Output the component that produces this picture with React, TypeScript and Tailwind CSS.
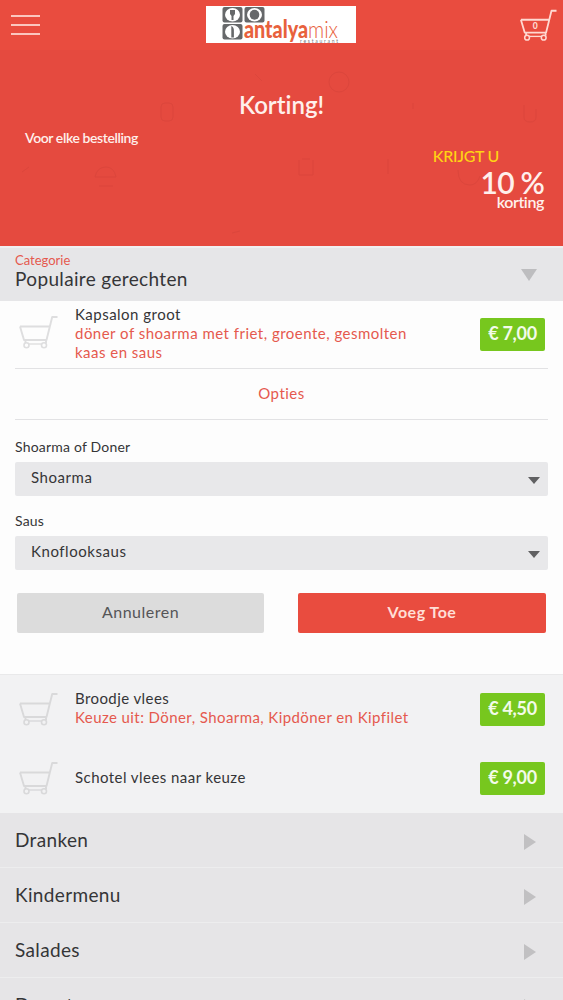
import React from "react";

const CartIcon = ({ className, count }: { className?: string; count?: number }) => (
  <svg viewBox="0 0 40 34" fill="none" stroke="currentColor" className={className}>
    <path
      d="M2 11.5 H31.5 M2 11.5 L6 25 H28.5 L34.2 2 H39.5 M7.5 25 V28 M28 25 V28"
      strokeWidth="1.9"
      strokeLinejoin="round"
    />
    <circle cx="8.5" cy="30.3" r="2.5" strokeWidth="1.6" />
    <circle cx="26" cy="30.3" r="2.5" strokeWidth="1.6" />
    <path d="M11 29 H23.5" strokeWidth="1.4" />
    {count !== undefined && (
      <text x="17" y="21.5" textAnchor="middle" fontSize="9" fontWeight="900" fill="currentColor" stroke="none">
        {count}
      </text>
    )}
  </svg>
);

const Logo = () => (
  <svg viewBox="0 0 150 37" className="h-[37px] w-[150px]">
    <rect width="150" height="37" fill="#fff" />
    <g fill="#66686a">
      <rect x="16.5" y="1" width="20" height="15.5" rx="2" />
      <rect x="38.5" y="1" width="20" height="15.5" rx="2" />
      <rect x="16.5" y="18" width="20" height="15.5" rx="2" />
    </g>
    <g fill="#fff">
      <ellipse cx="26.5" cy="8.7" rx="7.5" ry="6.7" />
      <ellipse cx="48.5" cy="8.7" rx="7.5" ry="6.7" />
      <ellipse cx="26.5" cy="25.7" rx="7.5" ry="6.7" />
    </g>
    <g fill="#66686a">
      <path d="M24 4 h5 v4 l-1.5 2 v4 h-2 v-4 l-1.5 -2 z" />
      <ellipse cx="48.5" cy="8.7" rx="4.8" ry="5" />
      <path d="M25.3 20 q3 1 2.6 6 v5.5 h-2.6 z" />
    </g>
    <text fontSize="24" fill="#e8613c">
      <tspan x="38" y="32" fontWeight="900" textLength="64" lengthAdjust="spacingAndGlyphs">
        antalya
      </tspan>
      <tspan x="102" y="32" fontWeight="300" textLength="30" lengthAdjust="spacingAndGlyphs">
        mix
      </tspan>
    </text>
    <text x="94" y="36.5" fontSize="5" fill="#77797b" textLength="38">
      restaurant
    </text>
  </svg>
);

// Faint food doodles behind the promo text
const Doodles = () => (
  <svg
    viewBox="0 0 563 196"
    className="absolute inset-0 h-full w-full text-[#cf4139] opacity-40"
    fill="none"
    stroke="currentColor"
  >
    <circle cx="339" cy="32" r="10" />
    <rect x="161" y="53" width="12" height="18" rx="4" />
    <path d="M524 55 v12 q0 5 6 5 q6 0 6 -5 v-8" />
    <path d="M299 110 v15 h14 v-15 M302 109 h8" />
    <path d="M95 127 q2 -10 11 -10 q8 0 10 10 z M99 136 h14" />
    <path d="M458 120 q0 15 12 15 q7 0 10 -9" />
    <path d="M255 24 l7 7 M413 53 v6 M388 109 v15 M22 122 l7 -5 M232 183 l8 -2" />
  </svg>
);

const Price = ({ value }: { value: string }) => (
  <span className="flex h-[33px] w-[65px] shrink-0 justify-center rounded-[2px] bg-[#77c71e] text-lg leading-[31px] font-bold tracking-[-0.3px] text-[#f3fbe9]">
    {value}
  </span>
);

const SelectField = ({ label, value }: { label: string; value: string }) => (
  <div className="h-[74px]">
    <p className="h-[25px] text-sm leading-5 tracking-[0.2px]">{label}</p>
    <button className="flex h-[34px] w-full items-center justify-between rounded-[2px] bg-[#e8e8ea] pr-2 pl-4 text-left">
      <span className="pb-[3px] text-[15px] tracking-[0.55px]">{value}</span>
      <svg viewBox="0 0 12 7" className="mt-[3px] h-[7px] w-3 fill-[#606062]">
        <path d="M0 0 H12 L6 7 Z" />
      </svg>
    </button>
  </div>
);

const categories = ["Dranken", "Kindermenu", "Salades", "Desert"];

const App = () => {
  return (
    <div className="h-[1000px] w-[563px] overflow-hidden bg-[#fdfdfd] font-['Lato',sans-serif] text-[#353537] [font-variant-ligatures:none]">
      <header className="flex h-[50px] items-start justify-between bg-[#e94c3f]">
        <button className="mt-[15px] ml-[11px] flex w-[29px] flex-col gap-[7px]" aria-label="Menu">
          <span className="h-[2px] bg-[#fbc6bf]" />
          <span className="h-[2px] bg-[#fbc6bf]" />
          <span className="h-[2px] bg-[#fbc6bf]" />
        </button>
        <div className="mt-[6px] ml-[3px]">
          <Logo />
        </div>
        <CartIcon count={0} className="mt-2 mr-[6px] h-[34px] w-[38px] text-[#ffd9d2]" />
      </header>

      <section className="relative h-[196px] bg-[#e54a3f] text-[#fff0ec]">
        <Doodles />
        <div className="relative">
          <h1 className="pt-[39px] text-center text-2xl leading-8 font-semibold">Korting!</h1>
          <p className="mt-[8px] ml-[25px] text-sm leading-[18px] font-semibold tracking-[-0.4px]">
            Voor elke bestelling
          </p>
          <p className="mr-16 text-right text-base leading-[18px] font-medium tracking-[-0.3px] text-[#ffd414]">
            KRIJGT U
          </p>
          <p className="mr-[19px] text-right text-[30px] leading-[34px] font-semibold tracking-[-0.8px]">10 %</p>
          <p className="-mt-[6px] mr-[19px] text-right text-base leading-[18px] font-semibold tracking-[-0.4px]">
            korting
          </p>
        </div>
      </section>

      <section className="flex h-[55px] items-center justify-between border-t-2 border-[#f0eff1] bg-[#e6e6e8] pr-[26px] pl-[15px]">
        <div className="pb-2">
          <p className="text-[13px] leading-4 text-[#e5594e]">Categorie</p>
          <h2 className="text-[19px] leading-[22px] tracking-[0.35px]">Populaire gerechten</h2>
        </div>
        <svg viewBox="0 0 16 12" className="h-3 w-4 fill-[#bdbdbf]">
          <path d="M0 0 H16 L8 12 Z" />
        </svg>
      </section>

      <section className="h-[373px] px-[15px]">
        <div className="flex h-[68px] items-start border-b border-[#e2e2e4]">
          <CartIcon className="mt-[13px] ml-[3px] h-[36px] w-10 text-[#dededf]" />
          <div className="mt-[4px] ml-[17px] w-[350px] text-[15px] leading-[19px] tracking-[0.48px]">
            <p>Kapsalon groot</p>
            <p className="text-[#e5594e]">döner of shoarma met friet, groente, gesmolten kaas en saus</p>
          </div>
          <div className="mt-[17px] mr-[3px] ml-auto">
            <Price value="€ 7,00" />
          </div>
        </div>
        <p className="h-[51px] border-b border-[#e2e2e4] text-center text-[15px] leading-[49px] tracking-[0.5px] text-[#e5594e]">
          Opties
        </p>
        <div className="pt-[17px]">
          <SelectField label="Shoarma of Doner" value="Shoarma" />
          <SelectField label="Saus" value="Knoflooksaus" />
        </div>
        <div className="mt-[8px] flex justify-between px-[2px] text-base tracking-[0.5px]">
          <button className="h-10 w-[247px] rounded-[2px] bg-[#dcdcdc] pb-[2px] text-[#555557]">Annuleren</button>
          <button className="h-10 w-[248px] rounded-[2px] bg-[#e94c3f] pb-[2px] font-bold text-[#ffdfd6]">
            Voeg Toe
          </button>
        </div>
      </section>

      <section className="bg-[#f2f2f3]">
        <div className="flex h-[70px] border-t border-[#e9e9ea] pr-[18px] pl-[18px]">
          <CartIcon className="mt-[16px] h-[36px] w-10 text-[#d9d9da]" />
          <div className="mt-[14px] ml-[17px] text-[15px] leading-[19px] tracking-[0.42px]">
            <p>Broodje vlees</p>
            <p className="text-[#e5594e]">Keuze uit: Döner, Shoarma, Kipdöner en Kipfilet</p>
          </div>
          <div className="mt-[18px] ml-auto">
            <Price value="€ 4,50" />
          </div>
        </div>
        <div className="flex h-[69px] items-center pr-[18px] pl-[18px]">
          <CartIcon className="mb-[2px] h-[36px] w-10 text-[#d9d9da]" />
          <p className="mb-[2px] ml-[17px] text-[15px] tracking-[0.45px]">Schotel vlees naar keuze</p>
          <div className="ml-auto">
            <Price value="€ 9,00" />
          </div>
        </div>
      </section>

      <nav className="bg-[#e6e5e7]">
        {categories.map((name) => (
          <div
            key={name}
            className="flex h-[55px] items-center justify-between border-b border-[#ededee] pr-[27px] pl-[15px]"
          >
            <span className="text-[19px] tracking-[0.35px]">{name}</span>
            <svg viewBox="0 0 12 16" className="mt-[3px] h-4 w-3 fill-[#c1c0c2]">
              <path d="M0 0 V16 L12 8 Z" />
            </svg>
          </div>
        ))}
      </nav>
    </div>
  );
};

export default App;
